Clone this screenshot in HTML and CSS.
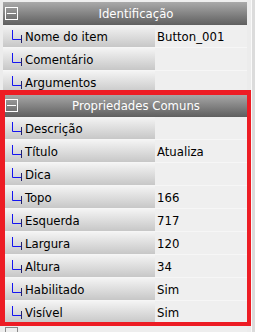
FILE: index.html
```html
<!DOCTYPE html>
<html>
<head>
<meta charset="utf-8">
<link rel="stylesheet" href="styles.css">
</head>
<body>
<div class="frame">
  <div class="panel">
    <div class="header"><span class="minus"></span><span class="title">Identificação</span></div>
    <div class="row"><div class="label"><svg class="tree" width="12" height="22" viewBox="0 0 12 22"><path d="M1.5 5V14.5H10" stroke="#1515f0" stroke-width="1" fill="none"/><path d="M10.5 10V18" stroke="#22226a" stroke-width="1"/></svg><span>Nome do item</span></div><div class="value">Button_001</div></div>
    <div class="row"><div class="label"><svg class="tree" width="12" height="22" viewBox="0 0 12 22"><path d="M1.5 5V14.5H10" stroke="#1515f0" stroke-width="1" fill="none"/><path d="M10.5 10V18" stroke="#22226a" stroke-width="1"/></svg><span>Comentário</span></div><div class="value"></div></div>
    <div class="row"><div class="label"><svg class="tree" width="12" height="22" viewBox="0 0 12 22"><path d="M1.5 5V14.5H10" stroke="#1515f0" stroke-width="1" fill="none"/><path d="M10.5 10V18" stroke="#22226a" stroke-width="1"/></svg><span>Argumentos</span></div><div class="value"></div></div>
    <div class="header"><span class="minus"></span><span class="title">Propriedades Comuns</span></div>
    <div class="row"><div class="label"><svg class="tree" width="12" height="22" viewBox="0 0 12 22"><path d="M1.5 5V14.5H10" stroke="#1515f0" stroke-width="1" fill="none"/><path d="M10.5 10V18" stroke="#22226a" stroke-width="1"/></svg><span>Descrição</span></div><div class="value"></div></div>
    <div class="row"><div class="label"><svg class="tree" width="12" height="22" viewBox="0 0 12 22"><path d="M1.5 5V14.5H10" stroke="#1515f0" stroke-width="1" fill="none"/><path d="M10.5 10V18" stroke="#22226a" stroke-width="1"/></svg><span>Título</span></div><div class="value">Atualiza</div></div>
    <div class="row"><div class="label"><svg class="tree" width="12" height="22" viewBox="0 0 12 22"><path d="M1.5 5V14.5H10" stroke="#1515f0" stroke-width="1" fill="none"/><path d="M10.5 10V18" stroke="#22226a" stroke-width="1"/></svg><span>Dica</span></div><div class="value"></div></div>
    <div class="row"><div class="label"><svg class="tree" width="12" height="22" viewBox="0 0 12 22"><path d="M1.5 5V14.5H10" stroke="#1515f0" stroke-width="1" fill="none"/><path d="M10.5 10V18" stroke="#22226a" stroke-width="1"/></svg><span>Topo</span></div><div class="value">166</div></div>
    <div class="row"><div class="label"><svg class="tree" width="12" height="22" viewBox="0 0 12 22"><path d="M1.5 5V14.5H10" stroke="#1515f0" stroke-width="1" fill="none"/><path d="M10.5 10V18" stroke="#22226a" stroke-width="1"/></svg><span>Esquerda</span></div><div class="value">717</div></div>
    <div class="row"><div class="label"><svg class="tree" width="12" height="22" viewBox="0 0 12 22"><path d="M1.5 5V14.5H10" stroke="#1515f0" stroke-width="1" fill="none"/><path d="M10.5 10V18" stroke="#22226a" stroke-width="1"/></svg><span>Largura</span></div><div class="value">120</div></div>
    <div class="row"><div class="label"><svg class="tree" width="12" height="22" viewBox="0 0 12 22"><path d="M1.5 5V14.5H10" stroke="#1515f0" stroke-width="1" fill="none"/><path d="M10.5 10V18" stroke="#22226a" stroke-width="1"/></svg><span>Altura</span></div><div class="value">34</div></div>
    <div class="row"><div class="label"><svg class="tree" width="12" height="22" viewBox="0 0 12 22"><path d="M1.5 5V14.5H10" stroke="#1515f0" stroke-width="1" fill="none"/><path d="M10.5 10V18" stroke="#22226a" stroke-width="1"/></svg><span>Habilitado</span></div><div class="value">Sim</div></div>
    <div class="row"><div class="label"><svg class="tree" width="12" height="22" viewBox="0 0 12 22"><path d="M1.5 5V14.5H10" stroke="#1515f0" stroke-width="1" fill="none"/><path d="M10.5 10V18" stroke="#22226a" stroke-width="1"/></svg><span>Visível</span></div><div class="value">Sim</div></div>
    <div class="header next"><span class="minus"></span><span class="title"></span></div>
  </div>
  <div class="side"></div>
</div>
<div class="highlight"></div>
</body>
</html>
```
FILE: styles.css
```css
html, body {
  margin: 0;
  padding: 0;
  height: 332px;
  overflow: hidden;
}
body {
  background: #ececec;
  font-family: "DejaVu Sans Condensed", "DejaVu Sans", sans-serif;
  font-size: 13px;
  color: #000;
  position: relative;
}
.frame {
  display: flex;
  height: 332px;
}
.panel {
  width: 244px;
  margin-left: 3px;
  padding-top: 2px;
  background: #efefef;
}
.side {
  flex: 1;
  margin-left: 4px;
  border-left: 1px solid #fafafa;
  background: #dcdcdc;
}
.header {
  display: flex;
  align-items: center;
  height: 23px;
  background: linear-gradient(#aaaaaa, #5f5f5f);
  color: #fff;
}
.header.next {
  align-items: flex-start;
  padding-top: 3px;
  height: 20px;
  background: #eeeeee;
}
.header.next .minus {
  border-color: #8a8a8a;
}
.minus {
  position: relative;
  width: 11px;
  height: 11px;
  margin-left: 2px;
  border: 1px solid #fff;
  flex: none;
}
.minus::after {
  content: "";
  position: absolute;
  left: 1px;
  right: 1px;
  top: 5px;
  height: 1px;
  background: #fff;
}
.title {
  flex: 1;
  text-align: center;
  padding-left: 7px;
}
.row {
  display: flex;
  height: 22px;
  border-bottom: 1px solid #f6f6f6;
}
.label {
  width: 152px;
  display: flex;
  align-items: center;
  background: linear-gradient(#f4f4f4, #c7c7c7);
}
.tree {
  margin-left: 8px;
  flex: none;
}
.label span {
  margin-left: 2px;
}
.value {
  flex: 1;
  display: flex;
  align-items: center;
  padding-left: 2px;
  background: #efefef;
}
.highlight {
  position: absolute;
  left: 0;
  top: 90px;
  width: 251px;
  height: 236px;
  box-sizing: border-box;
  border-style: solid;
  border-color: #ed1c24;
  border-width: 5px 4px 4px 5px;
}
```
